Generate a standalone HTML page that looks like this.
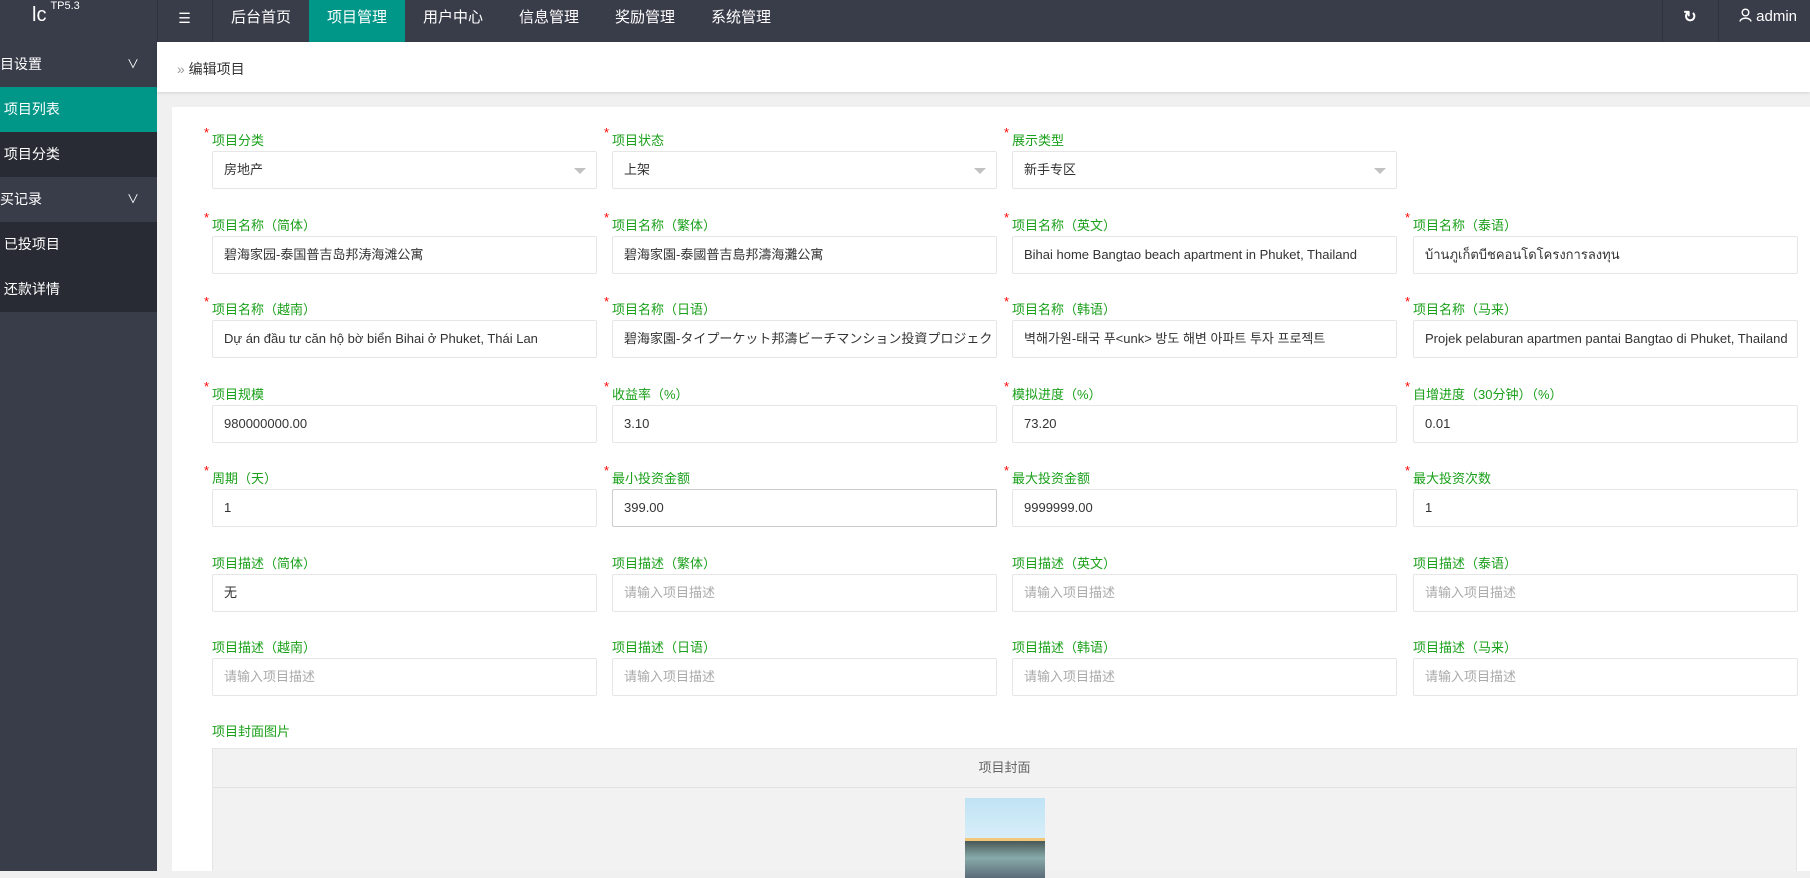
<!DOCTYPE html>
<html><head><meta charset="utf-8"><style>
*{box-sizing:border-box;margin:0;padding:0}
body{width:1810px;height:871px;overflow:hidden;background:#f0f0f0;font-family:"Liberation Sans","Noto Sans CJK SC",sans-serif;position:relative}
.hdr{position:absolute;left:0;top:0;width:1810px;height:42px;background:#393D49;color:#fff}
.hdr .n{position:absolute;top:0;height:42px;line-height:36px;font-size:15px;color:#fff;text-align:center;width:96px}
.side{position:absolute;left:0;top:42px;width:157px;height:829px;background:#393D49}
.side div{height:45px;line-height:45px;color:#fff;font-size:14px;padding-left:0;position:relative}
.crumb{position:absolute;left:157px;top:42px;width:1653px;height:50px;background:#fff;box-shadow:0 1px 3px rgba(0,0,0,.12);font-size:14px;color:#333;line-height:26px;padding:14px 0 0 20px}
.card{position:absolute;left:172px;top:107px;width:1638px;height:764px;background:#fff}
.l{position:absolute;font-size:13px;color:#1aa01a;white-space:nowrap}
.l b{color:#f00;font-weight:normal;position:absolute;left:-8px;top:-5px;font-size:13px}
.i{position:absolute;width:385px;height:38px;border:1px solid #e6e6e6;border-radius:2px;font-size:13px;color:#333;line-height:36px;padding-left:11px;white-space:nowrap;overflow:hidden;background:#fff}
.i.p{color:#aaa}
.i .a{position:absolute;right:10px;top:16px;border-left:6px solid transparent;border-right:6px solid transparent;border-top:6px solid #c2c2c2}
</style></head><body>
<div class="hdr">
<div style="position:absolute;left:32px;top:4px;font-size:20px;">lc<sup style="font-size:11px;position:relative;top:-4px;margin-left:4px">TP5.3</sup></div>
<div style="position:absolute;left:157px;top:0;width:1px;height:42px;background:#2f323c"></div>
<div class="n" style="left:157px;width:56px;border-right:1px solid #2f323c;font-size:14px">☰</div>
<div class="n" style="left:213px">后台首页</div>
<div class="n" style="left:309px;background:#009688">项目管理</div>
<div class="n" style="left:405px">用户中心</div>
<div class="n" style="left:501px">信息管理</div>
<div class="n" style="left:597px">奖励管理</div>
<div class="n" style="left:693px">系统管理</div>
<div style="position:absolute;left:1662px;top:0;width:1px;height:42px;background:#2f323c"></div>
<div style="position:absolute;left:1718px;top:0;width:1px;height:42px;background:#2f323c"></div>
<div class="n" style="left:1662px;width:56px;font-size:16px;font-weight:bold">↻</div>
<div style="position:absolute;left:1739px;top:7px;font-size:15px;line-height:20px">
<svg width="13" height="14" viewBox="0 0 13 14" style="vertical-align:-1px"><circle cx="6.5" cy="4.5" r="3.3" fill="none" stroke="#fff" stroke-width="1.4"/><path d="M1 13.5 C1.5 9 11.5 9 12 13.5" fill="none" stroke="#fff" stroke-width="1.4"/></svg> admin</div>
</div>
<div class="side">
<div>目设置<span style="position:absolute;left:127px;top:0;font-size:12px">&#8744;</span></div>
<div style="background:#009688">&nbsp;项目列表</div>
<div style="background:#282b33">&nbsp;项目分类</div>
<div>买记录<span style="position:absolute;left:127px;top:0;font-size:12px">&#8744;</span></div>
<div style="background:#282b33">&nbsp;已投项目</div>
<div style="background:#282b33">&nbsp;还款详情</div>
</div>
<div class="crumb"><span style="color:#999">»</span> 编辑项目</div>
<div class="card"></div>

<div class="l" style="left:212px;top:130px"><b>*</b>项目分类</div>
<div class="i" style="left:212px;top:151px">房地产<span class="a"></span></div>
<div class="l" style="left:612px;top:130px"><b>*</b>项目状态</div>
<div class="i" style="left:612px;top:151px">上架<span class="a"></span></div>
<div class="l" style="left:1012px;top:130px"><b>*</b>展示类型</div>
<div class="i" style="left:1012px;top:151px">新手专区<span class="a"></span></div>

<div class="l" style="left:212px;top:215px"><b>*</b>项目名称（简体）</div>
<div class="i" style="left:212px;top:236px">碧海家园-泰国普吉岛邦涛海滩公寓</div>
<div class="l" style="left:612px;top:215px"><b>*</b>项目名称（繁体）</div>
<div class="i" style="left:612px;top:236px">碧海家園-泰國普吉島邦濤海灘公寓</div>
<div class="l" style="left:1012px;top:215px"><b>*</b>项目名称（英文）</div>
<div class="i" style="left:1012px;top:236px">Bihai home Bangtao beach apartment in Phuket, Thailand</div>
<div class="l" style="left:1413px;top:215px"><b>*</b>项目名称（泰语）</div>
<div class="i" style="left:1413px;top:236px">บ้านภูเก็ตบีชคอนโดโครงการลงทุน</div>

<div class="l" style="left:212px;top:299px"><b>*</b>项目名称（越南）</div>
<div class="i" style="left:212px;top:320px">Dự án đầu tư căn hộ bờ biển Bihai ở Phuket, Thái Lan</div>
<div class="l" style="left:612px;top:299px"><b>*</b>项目名称（日语）</div>
<div class="i" style="left:612px;top:320px">碧海家園-タイプーケット邦濤ビーチマンション投資プロジェクト</div>
<div class="l" style="left:1012px;top:299px"><b>*</b>项目名称（韩语）</div>
<div class="i" style="left:1012px;top:320px">벽해가원-태국 푸&lt;unk&gt; 방도 해변 아파트 투자 프로젝트</div>
<div class="l" style="left:1413px;top:299px"><b>*</b>项目名称（马来）</div>
<div class="i" style="left:1413px;top:320px">Projek pelaburan apartmen pantai Bangtao di Phuket, Thailand</div>

<div class="l" style="left:212px;top:384px"><b>*</b>项目规模</div>
<div class="i" style="left:212px;top:405px">980000000.00</div>
<div class="l" style="left:612px;top:384px"><b>*</b>收益率（%）</div>
<div class="i" style="left:612px;top:405px">3.10</div>
<div class="l" style="left:1012px;top:384px"><b>*</b>模拟进度（%）</div>
<div class="i" style="left:1012px;top:405px">73.20</div>
<div class="l" style="left:1413px;top:384px"><b>*</b>自增进度（30分钟）（%）</div>
<div class="i" style="left:1413px;top:405px">0.01</div>

<div class="l" style="left:212px;top:468px"><b>*</b>周期（天）</div>
<div class="i" style="left:212px;top:489px">1</div>
<div class="l" style="left:612px;top:468px"><b>*</b>最小投资金额</div>
<div class="i" style="left:612px;top:489px;border-color:#ccc">399.00</div>
<div class="l" style="left:1012px;top:468px"><b>*</b>最大投资金额</div>
<div class="i" style="left:1012px;top:489px">9999999.00</div>
<div class="l" style="left:1413px;top:468px"><b>*</b>最大投资次数</div>
<div class="i" style="left:1413px;top:489px">1</div>

<div class="l" style="left:212px;top:553px">项目描述（简体）</div>
<div class="i" style="left:212px;top:574px">无</div>
<div class="l" style="left:612px;top:553px">项目描述（繁体）</div>
<div class="i p" style="left:612px;top:574px">请输入项目描述</div>
<div class="l" style="left:1012px;top:553px">项目描述（英文）</div>
<div class="i p" style="left:1012px;top:574px">请输入项目描述</div>
<div class="l" style="left:1413px;top:553px">项目描述（泰语）</div>
<div class="i p" style="left:1413px;top:574px">请输入项目描述</div>

<div class="l" style="left:212px;top:637px">项目描述（越南）</div>
<div class="i p" style="left:212px;top:658px">请输入项目描述</div>
<div class="l" style="left:612px;top:637px">项目描述（日语）</div>
<div class="i p" style="left:612px;top:658px">请输入项目描述</div>
<div class="l" style="left:1012px;top:637px">项目描述（韩语）</div>
<div class="i p" style="left:1012px;top:658px">请输入项目描述</div>
<div class="l" style="left:1413px;top:637px">项目描述（马来）</div>
<div class="i p" style="left:1413px;top:658px">请输入项目描述</div>

<div class="l" style="left:212px;top:721px">项目封面图片</div>
<div style="position:absolute;left:212px;top:748px;width:1585px;height:123px;background:#f2f2f2;border:1px solid #e6e6e6;border-bottom:none">
<div style="height:39px;border-bottom:1px solid #e2e2e2;text-align:center;line-height:38px;font-size:13px;color:#666">项目封面</div>
<div style="position:absolute;left:752px;top:49px;width:80px;height:80px;background:linear-gradient(#bfe3f5 0%,#d8eef8 50%,#f2c77a 50%,#f2c77a 54%,#4a5a58 54%,#8aa 75%,#5b6b78 100%)"></div>
</div>
</body></html>
